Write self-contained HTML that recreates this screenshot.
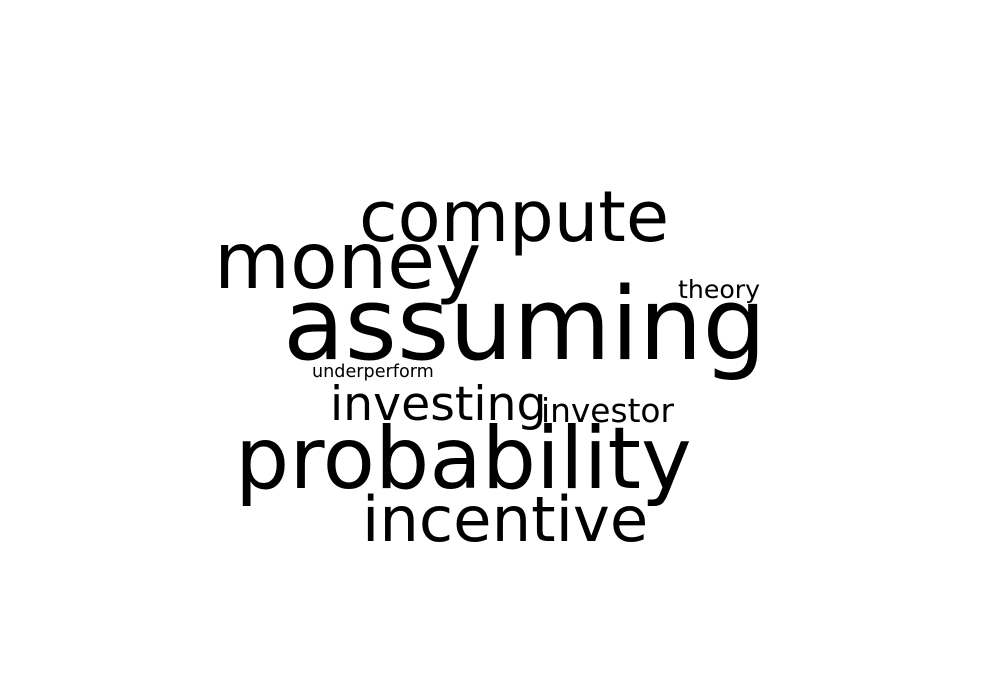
<!DOCTYPE html>
<html><head><meta charset="utf-8"><style>
html,body{margin:0;padding:0;background:#fff;width:1000px;height:700px;overflow:hidden}
svg text{font-family:"DejaVu Sans","Liberation Sans",sans-serif;fill:#000}
</style></head><body>
<svg width="1000" height="700" xmlns="http://www.w3.org/2000/svg">
<text x="359" y="241" font-size="70.3">compute</text>
<text x="214" y="288" font-size="78">money</text>
<text x="283" y="359" font-size="100.5">assuming</text>
<text x="678" y="298" font-size="25.2">theory</text>
<text x="312" y="377" font-size="17.6">underperform</text>
<text x="330" y="420" font-size="47.3">investing</text>
<text x="541" y="422" font-size="32.8">investor</text>
<text x="235" y="488" font-size="85.6">probability</text>
<text x="362" y="541" font-size="62.4">incentive</text>
</svg>
</body></html>
